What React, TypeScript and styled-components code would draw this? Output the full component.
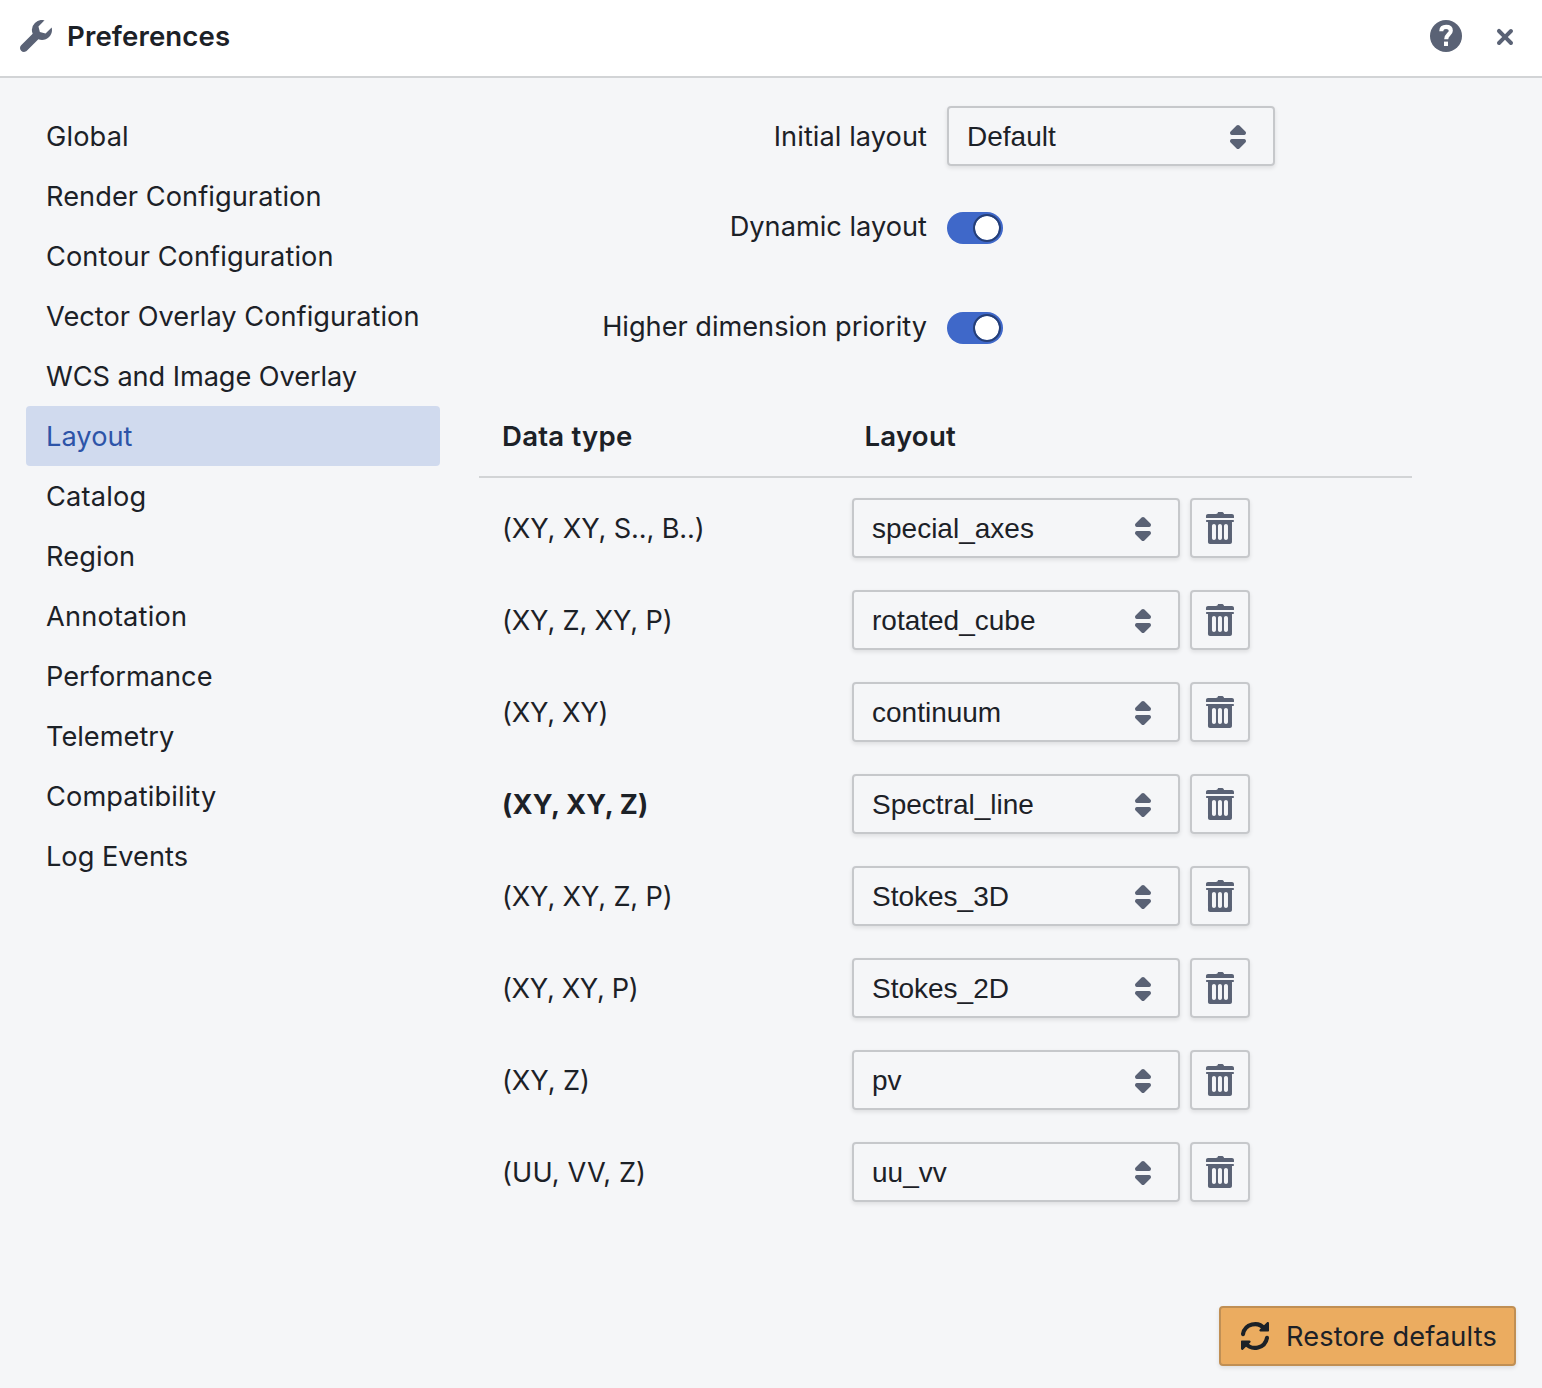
import React from 'react';
import styled, { createGlobalStyle } from 'styled-components';

const GlobalStyle = createGlobalStyle`
  *, *::before, *::after { box-sizing: border-box; }
  body {
    margin: 0;
    background: #f5f6f8;
    color: #1c2127;
    font-family: Inter, "Open Sans", sans-serif;
    font-size: 27.2px;
    line-height: 36px;
    font-kerning: normal;
  }
`;

const ui = '#5a6275';

const Dialog = styled.div`
  width: 1542px;
  height: 1388px;
  display: flex;
  flex-direction: column;
  background: #f5f6f8;
  overflow: hidden;
`;

const Header = styled.header`
  flex: none;
  height: 78px;
  padding: 0 21px 4px 20px;
  display: flex;
  align-items: center;
  background: #fff;
  border-bottom: 2px solid #d2d4d6;
`;

const Title = styled.h1`
  margin: 0 auto 0 15px;
  font-size: 27.6px;
  line-height: 36px;
  font-weight: 600;
  letter-spacing: 0.12px;
`;

const IconButton = styled.button`
  border: 0;
  padding: 0;
  margin-left: 27px;
  background: none;
  display: flex;
`;

const CloseButton = styled(IconButton)`
  padding-top: 2px;
`;

const Body = styled.div`
  flex: 1;
  display: flex;
  padding: 28px 0 0 26px;
`;

const Nav = styled.nav`
  width: 414px;
  flex: none;
  display: flex;
  flex-direction: column;
`;

const Tab = styled.div<{ $active?: boolean; $track: number }>`
  height: 60px;
  padding: 1px 0 0 20px;
  border-radius: 4px;
  line-height: 60px;
  white-space: nowrap;
  letter-spacing: ${(p) => p.$track}px;
  color: ${(p) => (p.$active ? '#2d54a8' : 'inherit')};
  background: ${(p) => (p.$active ? '#d0daee' : 'transparent')};
`;

const Panel = styled.main`
  width: 933px;
  margin-left: 39px;
`;

const FormRow = styled.div<{ $gap: number }>`
  height: 60px;
  margin-bottom: ${(p) => p.$gap}px;
  display: grid;
  grid-template-columns: 448px auto;
  column-gap: 20px;
  align-items: center;
  justify-content: start;
`;

const Label = styled.label<{ $track: number }>`
  padding-top: 2px;
  text-align: right;
  white-space: nowrap;
  letter-spacing: ${(p) => p.$track}px;
`;

const SelectBox = styled.div`
  width: 328px;
  height: 60px;
  padding: 2px 19px 0 18px;
  display: flex;
  align-items: center;
  justify-content: space-between;
  border: 2px solid #c6c8cb;
  border-radius: 4px;
  box-shadow: 0 2px 4px rgba(17, 20, 24, 0.1);
  font-family: "Liberation Sans", Arial, sans-serif;
  font-size: 28px;
  white-space: nowrap;
`;

const DeleteButton = styled.button`
  width: 60px;
  height: 60px;
  padding: 0;
  display: flex;
  align-items: center;
  justify-content: center;
  background: none;
  border: 2px solid #c6c8cb;
  border-radius: 4px;
  box-shadow: 0 2px 4px rgba(17, 20, 24, 0.1);
`;

const Toggle = styled.div`
  width: 56px;
  height: 32px;
  margin-top: 4px;
  padding: 2px;
  display: flex;
  justify-content: flex-end;
  border-radius: 16px;
  background: #3f68c9;
`;

const Knob = styled.span`
  width: 28px;
  height: 28px;
  border: 2px solid #263f76;
  border-radius: 50%;
  background: #fff;
  background-clip: padding-box;
`;

const TableHead = styled.div`
  height: 82px;
  padding-left: 23px;
  display: grid;
  grid-template-columns: 362.5px auto;
  align-items: center;
  justify-content: start;
  border-bottom: 2px solid #d2d4d6;
  font-size: 27.6px;
  font-weight: 600;
  letter-spacing: 0.22px;
`;

const Rows = styled.div`
  padding: 20px 0 0 23px;
  display: flex;
  flex-direction: column;
  gap: 32px;
`;

const Row = styled.div`
  display: grid;
  grid-template-columns: 350px 328px 60px;
  align-items: center;
`;

const TypeCell = styled.span<{ $bold?: boolean; $track: number }>`
  padding-top: 2px;
  font-weight: ${(p) => (p.$bold ? 700 : 400)};
  letter-spacing: ${(p) => p.$track}px;
  white-space: nowrap;
`;

const DeleteCell = styled.div`
  padding-left: 10px;
`;

const Footer = styled.footer`
  flex: none;
  display: flex;
  justify-content: flex-end;
  padding: 0 26px 22px;
`;

const RestoreButton = styled.button`
  width: 297px;
  height: 60px;
  padding: 0 0 0 18px;
  display: flex;
  align-items: center;
  gap: 15px;
  font: inherit;
  letter-spacing: 0.12px;
  white-space: nowrap;
  color: #1c2127;
  background: #ebac60;
  border: 2px solid #c08f54;
  border-radius: 4px;
  box-shadow: 0 2px 4px rgba(17, 20, 24, 0.1);
`;

const RestoreText = styled.span`
  padding-top: 2px;
`;

const Glyph = ({ children, color = ui }: { children: React.ReactNode; color?: string }) => (
  <svg width="32" height="32" viewBox="0 0 16 16" fill={color} aria-hidden="true">
    {children}
  </svg>
);

const Wrench = () => (
  <Glyph>
    <path d="M15.83 3.7l-3.06 3.05-2.84-.7-.7-2.83L12.29.17a5.004 5.004 0 00-4.83 1.29 4.967 4.967 0 00-1.12 5.36L.58 12.58c-.36.36-.58.86-.58 1.41 0 1.1.9 2 2 2 .55 0 1.05-.22 1.41-.59l5.77-5.77c1.79.69 3.91.35 5.35-1.12 1.32-1.3 1.74-3.15 1.3-4.81z" />
  </Glyph>
);

const Help = () => (
  <Glyph>
    <circle cx="8" cy="8" r="8" />
    <path d="M5.65 5.65C5.7 4.15 6.7 3.45 8.05 3.45c1.4 0 2.35.7 2.35 1.9 0 1.75-2.3 1.95-2.3 4.25" fill="none" stroke="#fff" strokeWidth="2.05" />
    <path d="M7 10.8h2V13H7z" fill="#fff" />
  </Glyph>
);

const Close = () => (
  <Glyph>
    <path d="M9.41 8l2.29-2.29c.19-.18.3-.43.3-.71a1.003 1.003 0 00-1.71-.71L8 6.59l-2.29-2.3a1.003 1.003 0 00-1.42 1.42L6.59 8 4.3 10.29c-.19.18-.3.43-.3.71a1.003 1.003 0 001.71.71L8 9.41l2.29 2.29c.18.19.43.3.71.3a1.003 1.003 0 00.71-1.71L9.41 8z" />
  </Glyph>
);

const Caret = () => (
  <Glyph>
    <path d="M5 7h6a1.003 1.003 0 00.71-1.71l-3-3C8.53 2.11 8.28 2 8 2s-.53.11-.71.29l-3 3A1.003 1.003 0 005 7zm6 2H5a1.003 1.003 0 00-.71 1.71l3 3c.18.18.43.29.71.29s.53-.11.71-.29l3-3A1.003 1.003 0 0011 9z" />
  </Glyph>
);

const Trash = () => (
  <Glyph>
    <path d="M14.49 3.99h-13c-.28 0-.5.22-.5.5s.22.5.5.5h.5v10c0 .55.45 1 1 1h10c.55 0 1-.45 1-1v-10h.5c.28 0 .5-.22.5-.5s-.22-.5-.5-.5zm-8.5 9c0 .55-.45 1-1 1s-1-.45-1-1v-6c0-.55.45-1 1-1s1 .45 1 1v6zm3 0c0 .55-.45 1-1 1s-1-.45-1-1v-6c0-.55.45-1 1-1s1 .45 1 1v6zm3 0c0 .55-.45 1-1 1s-1-.45-1-1v-6c0-.55.45-1 1-1s1 .45 1 1v6zm2-12h-4c0-.55-.45-1-1-1h-2c0 .55-.45 1-1 1h-4c-.55 0-1 .45-1 1v1h14v-1c0-.55-.45-1-1-1z" />
  </Glyph>
);

const Refresh = () => (
  <Glyph color="#1c2127">
    <path d="M2 7.1A6.05 6.05 0 0 1 12.7 4.4M14 8.9A6.05 6.05 0 0 1 3.3 11.6" fill="none" stroke="#1c2127" strokeWidth="2.05" strokeLinecap="round" />
    <path d="M13.9 1.3c.4-.5 1.1-.2 1.1.4v3.6c0 .3-.2.5-.5.5h-3.7c-.55 0-.85-.6-.45-1zM2.1 14.7c-.4.5-1.1.2-1.1-.4v-3.6c0-.3.2-.5.5-.5h3.7c.55 0 .85.6.45 1z" />
  </Glyph>
);

const Select = ({ value }: { value: string }) => (
  <SelectBox role="combobox">
    <span>{value}</span>
    <Caret />
  </SelectBox>
);

const Switch = () => (
  <Toggle role="switch" aria-checked="true">
    <Knob />
  </Toggle>
);

const tabs: [string, number][] = [
  ['Global', 0.15],
  ['Render Configuration', 0.06],
  ['Contour Configuration', 0.07],
  ['Vector Overlay Configuration', 0.02],
  ['WCS and Image Overlay', -0.08],
  ['Layout', 0.05],
  ['Catalog', 0.2],
  ['Region', 0.12],
  ['Annotation', 0.18],
  ['Performance', 0],
  ['Telemetry', 0],
  ['Compatibility', 0.12],
  ['Log Events', 0],
];

const mappings: { type: string; track: number; layout: string; bold?: boolean }[] = [
  { type: '(XY, XY, S.., B..)', track: -0.14, layout: 'special_axes' },
  { type: '(XY, Z, XY, P)', track: -0.18, layout: 'rotated_cube' },
  { type: '(XY, XY)', track: -0.28, layout: 'continuum' },
  { type: '(XY, XY, Z)', track: 0.19, layout: 'Spectral_line', bold: true },
  { type: '(XY, XY, Z, P)', track: -0.18, layout: 'Stokes_3D' },
  { type: '(XY, XY, P)', track: -0.36, layout: 'Stokes_2D' },
  { type: '(XY, Z)', track: -0.08, layout: 'pv' },
  { type: '(UU, VV, Z)', track: 0.13, layout: 'uu_vv' },
];

export default function App() {
  return (
    <>
      <GlobalStyle />
      <Dialog>
        <Header>
          <Wrench />
          <Title>Preferences</Title>
          <IconButton aria-label="Help"><Help /></IconButton>
          <CloseButton aria-label="Close"><Close /></CloseButton>
        </Header>
        <Body>
          <Nav>
            {tabs.map(([name, track]) => (
              <Tab key={name} $track={track} $active={name === 'Layout'}>{name}</Tab>
            ))}
          </Nav>
          <Panel>
            <FormRow $gap={30}>
              <Label $track={0.06}>Initial layout</Label>
              <Select value="Default" />
            </FormRow>
            <FormRow $gap={40}>
              <Label $track={0}>Dynamic layout</Label>
              <Switch />
            </FormRow>
            <FormRow $gap={40}>
              <Label $track={-0.02}>Higher dimension priority</Label>
              <Switch />
            </FormRow>
            <TableHead>
              <span>Data type</span>
              <span>Layout</span>
            </TableHead>
            <Rows>
              {mappings.map((m) => (
                <Row key={m.type}>
                  <TypeCell $track={m.track} $bold={m.bold}>{m.type}</TypeCell>
                  <Select value={m.layout} />
                  <DeleteCell>
                    <DeleteButton aria-label="Delete"><Trash /></DeleteButton>
                  </DeleteCell>
                </Row>
              ))}
            </Rows>
          </Panel>
        </Body>
        <Footer>
          <RestoreButton>
            <Refresh />
            <RestoreText>Restore defaults</RestoreText>
          </RestoreButton>
        </Footer>
      </Dialog>
    </>
  );
}
